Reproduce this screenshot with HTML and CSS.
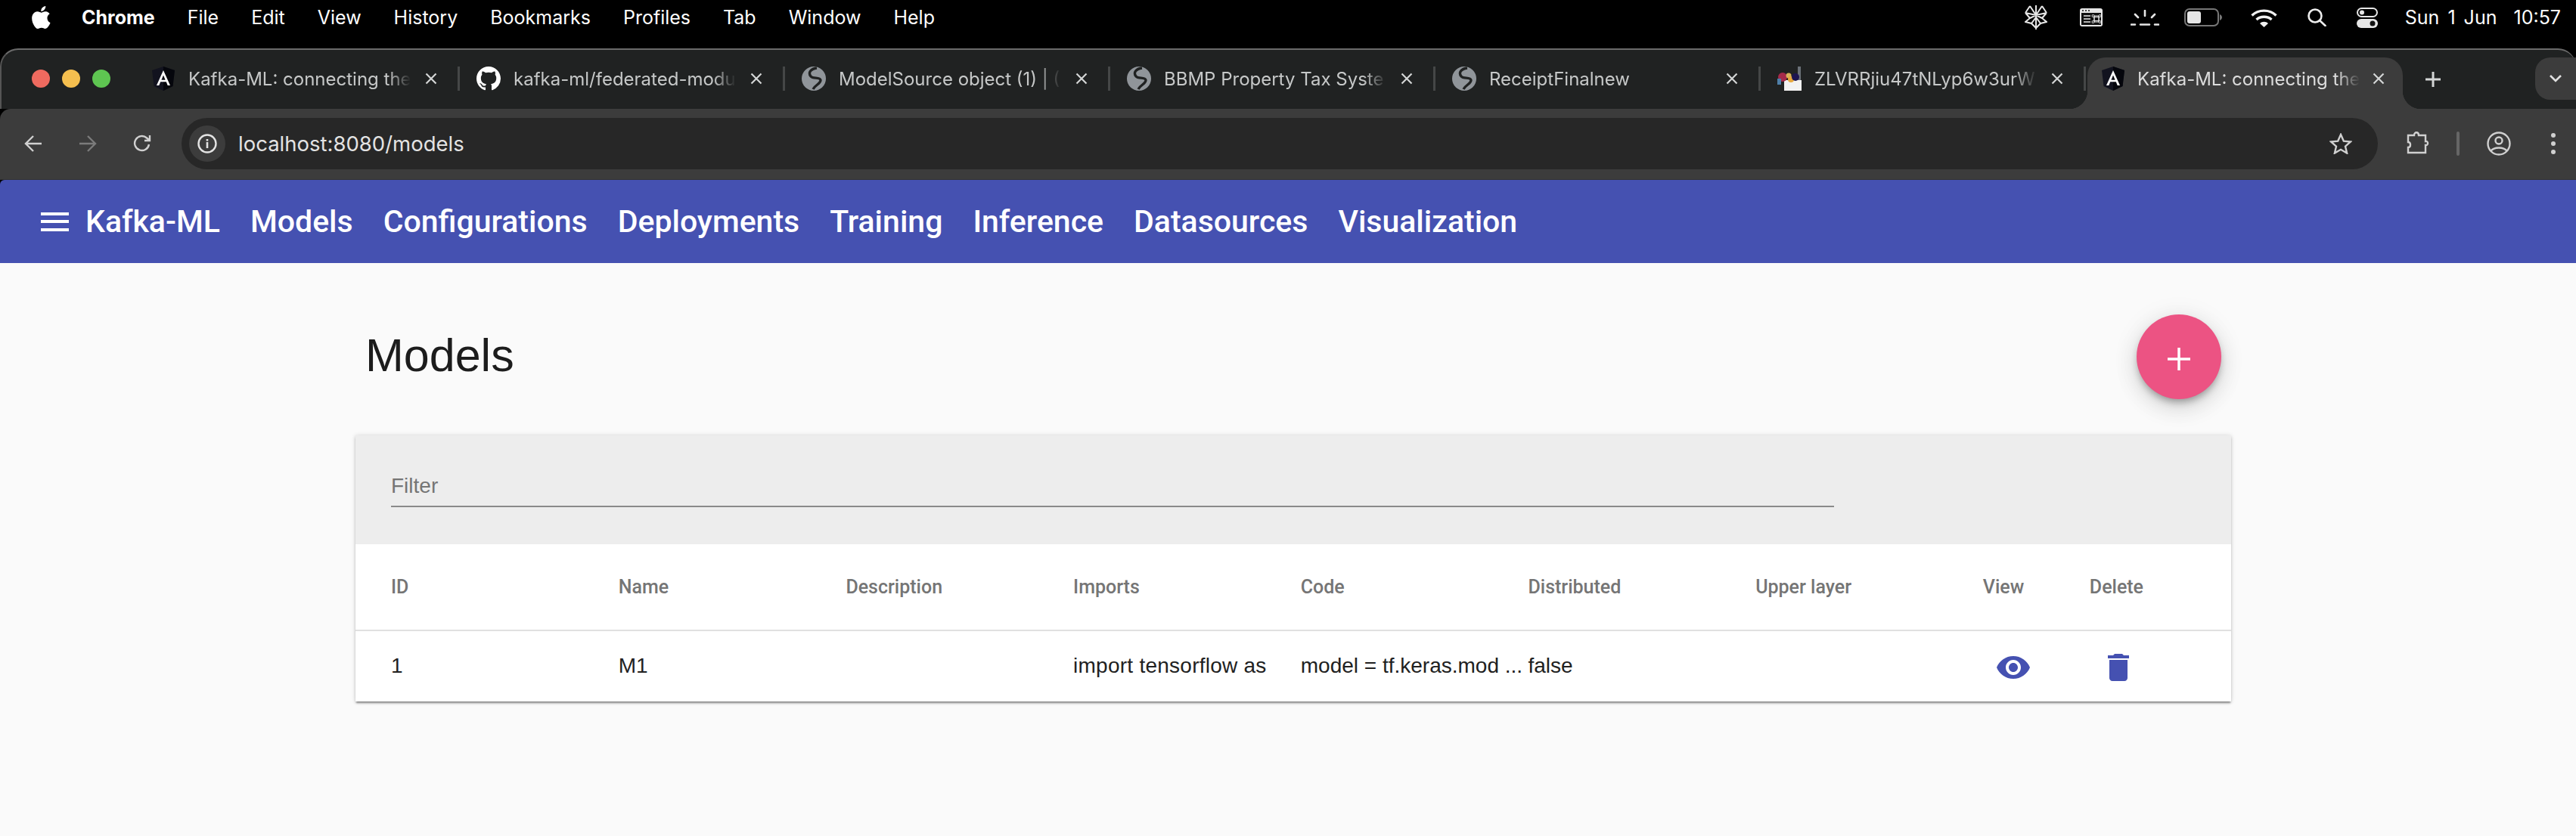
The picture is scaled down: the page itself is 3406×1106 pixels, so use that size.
FILE: index.html
```html
<!DOCTYPE html>
<html lang="en">
<head>
  <meta charset="UTF-8">
  <title>Kafka-ML: connecting the</title>
  <link rel="stylesheet" href="styles.css">
</head>
<body>
  <!-- macOS menu bar -->
  <div class="menubar">
    <svg class="apple" viewBox="3.5 2 16.5 20"><path fill="#fff" d="M18.71 19.5c-.83 1.24-1.71 2.45-3.05 2.47-1.34.03-1.77-.79-3.29-.79-1.53 0-2 .77-3.27.82-1.31.05-2.3-1.32-3.14-2.53C4.25 17 2.94 12.45 4.7 9.39c.87-1.52 2.43-2.48 4.12-2.51 1.28-.02 2.5.87 3.29.87.78 0 2.26-1.07 3.81-.91.65.03 2.47.26 3.64 1.98-.09.06-2.17 1.28-2.15 3.81.03 3.02 2.65 4.03 2.68 4.04-.03.07-.42 1.44-1.38 2.83M13 3.5c.73-.83 1.94-1.46 2.94-1.5.13 1.17-.34 2.35-1.04 3.19-.69.85-1.83 1.51-2.95 1.42-.15-1.15.41-2.35 1.05-3.11z"/></svg>
    <div class="menu-items">
      <span class="app-name">Chrome</span>
      <span>File</span>
      <span>Edit</span>
      <span>View</span>
      <span>History</span>
      <span>Bookmarks</span>
      <span>Profiles</span>
      <span>Tab</span>
      <span>Window</span>
      <span>Help</span>
    </div>
    <div class="status">
      <svg class="st-petal" viewBox="0 0 30 32" fill="none" stroke="#e6e6e6" stroke-width="2"><path d="M15 0v32M7 1l8 12 8-12M1 10l6-9M29 10l-6-9M1 10l6 7-6 5 8 2 6 6 6-6 8-2-6-5 6-7M7 17l8-4 8 4M1 10l14 3 14-3M9 24l6-8 6 8"/></svg>
      <svg class="st-cmd" viewBox="0 0 30 24"><rect width="30" height="24" rx="3" fill="#e6e6e6"/><rect x="2" y="6" width="26" height="16" fill="#111"/><g fill="#111"><circle cx="4" cy="3" r="1"/><circle cx="8" cy="3" r="1"/><circle cx="12" cy="3" r="1"/></g><path d="M5 10h9M5 14h9M5 18h9" stroke="#e6e6e6" stroke-width="1.6"/><path d="M19 10h6v8h-6zM19 10a1.5 1.5 0 1 0-1.5 1.500h9a1.500 1.500 0 1 0-1.500-1.500v8a1.500 1.500 0 1 0 1.500-1.500h-9a1.500 1.500 0 1 0 1.500 1.500z" fill="none" stroke="#e6e6e6" stroke-width="1"/></svg>
      <svg class="st-bright" viewBox="0 0 38 21" fill="none" stroke="#e6e6e6" stroke-width="2.600" stroke-linecap="round"><path d="M19 1v7M6 6l4 4M32 6l-4 4"/><path d="M1 19.500h5M13 19.500h12M32 19.500h5"/></svg>
      <svg class="st-batt" viewBox="0 0 50 24"><rect x="1" y="1" width="44" height="22" rx="6" fill="none" stroke="#777" stroke-width="2"/><rect x="4" y="4" width="18" height="16" rx="3" fill="#e6e6e6"/><path d="M47 8c2 1 3 2.500 3 4s-1 3-3 4z" fill="#777"/></svg>
      <svg class="st-wifi" viewBox="0 0 35 25" fill="none" stroke="#f0f0f0" stroke-width="3.400"><path d="M1.500 9.500C10 1 25 1 33.500 9.500M7.500 15C13 10 22 10 27.500 15"/><path d="M12 20c3-3 8-3 11 0l-5.500 5z" fill="#f0f0f0" stroke="none"/></svg>
      <svg class="st-search" viewBox="0 0 25 24" fill="none" stroke="#ececec" stroke-width="2.600" stroke-linecap="round"><circle cx="10" cy="10" r="8.500"/><path d="M16 16l7.500 7"/></svg>
      <svg class="st-toggle" viewBox="0 0 28 27"><rect x="1" y="1" width="26" height="11" rx="5.500" fill="none" stroke="#e6e6e6" stroke-width="2"/><circle cx="7" cy="6.500" r="3" fill="#e6e6e6"/><rect y="15" width="28" height="12" rx="6" fill="#e6e6e6"/><circle cx="21" cy="21" r="3.500" fill="#111"/></svg>
      <span class="clock">Sun 1 Jun  10:57</span>
    </div>
  </div>

  <!-- browser window -->
  <div class="tabstrip">
    <div class="lights">
      <i class="light red"></i>
      <i class="light yellow"></i>
      <i class="light green"></i>
    </div>
    <div class="tab">
      <svg class="favicon" viewBox="0 0 32 32"><path fill="#12131f" d="M16 0l15 5-2.500 21L16 32 3.500 26 1 5z"/><path fill="#05060c" d="M16 0l15 5-2.500 21L16 32z"/><path fill="#fff" d="M16 5l-9 20h3.300l1.900-4.700h7.600l1.900 4.700H25zm2.600 12.700h-5.200L16 11.500z"/></svg>
      <span class="tab-title">Kafka-ML: connecting the</span>
      <svg class="tab-close" viewBox="0 0 16 16"><path d="M1.500 1.500l13 13M14.500 1.500l-13 13"/></svg>
    </div>
    <div class="tab">
      <svg class="favicon" viewBox="0 0 16 16"><path fill="#fff" d="M8 0C3.580 0 0 3.580 0 8c0 3.540 2.290 6.530 5.470 7.590.4.070.55-.17.55-.38 0-.19-.01-.82-.01-1.490-2.010.37-2.530-.49-2.690-.94-.09-.23-.48-.94-.82-1.130-.28-.15-.68-.52-.01-.53.63-.01 1.080.58 1.230.82.72 1.210 1.870.87 2.330.66.07-.52.28-.87.51-1.070-1.780-.2-3.640-.89-3.640-3.950 0-.87.31-1.590.82-2.150-.08-.2-.36-1.020.08-2.120 0 0 .67-.21 2.200.82.64-.18 1.320-.27 2-.27.68 0 1.360.09 2 .27 1.530-1.040 2.200-.82 2.200-.82.44 1.100.16 1.920.08 2.120.51.56.82 1.270.82 2.150 0 3.070-1.870 3.750-3.650 3.950.29.25.54.73.54 1.480 0 1.070-.01 1.930-.01 2.200 0 .21.15.46.55.38A8.013 8.013 0 0016 8c0-4.420-3.580-8-8-8z"/></svg>
      <span class="tab-title">kafka-ml/federated-modu</span>
      <svg class="tab-close" viewBox="0 0 16 16"><path d="M1.500 1.500l13 13M14.500 1.500l-13 13"/></svg>
    </div>
    <div class="tab">
      <svg class="favicon" viewBox="0 0 32 32"><circle cx="16" cy="16" r="16" fill="#90959a"/><path d="M20 2C12 3 8 8 12 13c3 4 12 0 13 5 0 5-7 6-10 12" fill="none" stroke="#202222" stroke-width="3.400"/></svg>
      <span class="tab-title">ModelSource object (1) | (</span>
      <svg class="tab-close" viewBox="0 0 16 16"><path d="M1.500 1.500l13 13M14.500 1.500l-13 13"/></svg>
    </div>
    <div class="tab">
      <svg class="favicon" viewBox="0 0 32 32"><circle cx="16" cy="16" r="16" fill="#90959a"/><path d="M20 2C12 3 8 8 12 13c3 4 12 0 13 5 0 5-7 6-10 12" fill="none" stroke="#202222" stroke-width="3.400"/></svg>
      <span class="tab-title">BBMP Property Tax Syste</span>
      <svg class="tab-close" viewBox="0 0 16 16"><path d="M1.500 1.500l13 13M14.500 1.500l-13 13"/></svg>
    </div>
    <div class="tab">
      <svg class="favicon" viewBox="0 0 32 32"><circle cx="16" cy="16" r="16" fill="#90959a"/><path d="M20 2C12 3 8 8 12 13c3 4 12 0 13 5 0 5-7 6-10 12" fill="none" stroke="#202222" stroke-width="3.400"/></svg>
      <span class="tab-title">ReceiptFinalnew</span>
      <svg class="tab-close" viewBox="0 0 16 16"><path d="M1.500 1.500l13 13M14.500 1.500l-13 13"/></svg>
    </div>
    <div class="tab">
      <svg class="favicon" viewBox="0 0 32 32"><rect x="27" y="0" width="4" height="20" fill="#6b7178"/><rect x="9" y="18" width="23" height="14" fill="#f2f2f2"/><circle cx="7" cy="14" r="6" fill="#a52a4a"/><rect x="0" y="16" width="5" height="8" fill="#4f7fa8"/><circle cx="15" cy="12" r="3.500" fill="#d8b25a"/><circle cx="18" cy="17" r="4" fill="#e8a83c"/><circle cx="24" cy="14" r="5" fill="#1c1450"/></svg>
      <span class="tab-title">ZLVRRjiu47tNLyp6w3urW</span>
      <svg class="tab-close" viewBox="0 0 16 16"><path d="M1.500 1.500l13 13M14.500 1.500l-13 13"/></svg>
    </div>
    <div class="tab active">
      <svg class="favicon" viewBox="0 0 32 32"><path fill="#12131f" d="M16 0l15 5-2.500 21L16 32 3.500 26 1 5z"/><path fill="#05060c" d="M16 0l15 5-2.500 21L16 32z"/><path fill="#fff" d="M16 5l-9 20h3.300l1.900-4.700h7.600l1.900 4.700H25zm2.600 12.700h-5.200L16 11.500z"/></svg>
      <span class="tab-title">Kafka-ML: connecting the</span>
      <svg class="tab-close" viewBox="0 0 16 16"><path d="M1.500 1.500l13 13M14.500 1.500l-13 13"/></svg>
    </div>
    <svg class="new-tab" viewBox="0 0 20 20"><path d="M10 0v20M0 10h20"/></svg>
    <div class="tab-list">
      <svg viewBox="0 0 16 10"><path d="M1 1l7 7 7-7"/></svg>
    </div>
  </div>

  <div class="toolbar">
    <div class="nav-btn">
      <svg viewBox="0 0 24 24"><path d="M23 12H2M12 2L2 12l10 10"/></svg>
    </div>
    <div class="nav-btn off">
      <svg viewBox="0 0 24 24"><path d="M1 12h21M12 2l10 10-10 10"/></svg>
    </div>
    <div class="nav-btn">
      <svg viewBox="0 0 24 24"><path d="M21 13a9.500 9.500 0 1 1-3-8.500L22 8M22 1v7h-7"/></svg>
    </div>
    <div class="omnibox">
      <div class="site-chip">
        <svg viewBox="0 0 26 26"><circle cx="13" cy="13" r="11.500" fill="none" stroke="#e3e3e3" stroke-width="2.400"/><rect x="11.700" y="11" width="2.600" height="8" fill="#e3e3e3"/><rect x="11.700" y="7" width="2.600" height="2.600" fill="#e3e3e3"/></svg>
      </div>
      <span class="url">localhost:8080/models</span>
      <svg class="star" viewBox="0 0 30 28"><path d="M15 2l3.800 8.600 9.200.9-7 6.100 2.100 9-8.100-4.800-8.100 4.800 2.100-9-7-6.100 9.200-.9z"/></svg>
    </div>
    <div class="nav-btn ext">
      <svg viewBox="0 0 32 32"><path d="M3 5h8c0-5 6-5 6 0h9v8c4-1 4 6 0 5v10H3v-7c4 0 4-7 0-7z"/></svg>
    </div>
    <div class="toolbar-sep"></div>
    <div class="nav-btn profile">
      <svg viewBox="0 0 32 32"><circle cx="16" cy="16" r="14.500"/><circle cx="16" cy="12" r="4.500"/><path d="M5 26c5-6 17-6 22 0"/></svg>
    </div>
    <div class="dots">
      <i></i>
      <i></i>
      <i></i>
    </div>
  </div>

  <!-- the app -->
  <div class="appbar">
    <div class="hamburger">
      <i></i>
      <i></i>
      <i></i>
    </div>
    <nav class="nav">
      <a>Kafka-ML</a>
      <a>Models</a>
      <a>Configurations</a>
      <a>Deployments</a>
      <a>Training</a>
      <a>Inference</a>
      <a>Datasources</a>
      <a>Visualization</a>
    </nav>
  </div>

  <div class="page">
    <div class="page-head">
      <h1>Models</h1>
      <div class="fab">
        <svg viewBox="0 0 30 30"><path d="M15 0v30M0 15h30"/></svg>
      </div>
    </div>
    <div class="card">
      <div class="filter-bar">
        <div class="filter-field">Filter</div>
      </div>
      <div class="row head-row">
        <div>ID</div>
        <div>Name</div>
        <div>Description</div>
        <div>Imports</div>
        <div>Code</div>
        <div>Distributed</div>
        <div>Upper layer</div>
        <div>View</div>
        <div>Delete</div>
      </div>
      <div class="row data-row">
        <div>1</div>
        <div>M1</div>
        <div></div>
        <div>import tensorflow as</div>
        <div>model = tf.keras.mod ...</div>
        <div>false</div>
        <div></div>
        <div><svg class="act view-icon" viewBox="0 0 24 24"><path d="M12 4.500C7 4.500 2.730 7.610 1 12c1.730 4.390 6 7.500 11 7.500s9.270-3.110 11-7.500c-1.730-4.390-6-7.500-11-7.500zM12 17c-2.760 0-5-2.240-5-5s2.240-5 5-5 5 2.240 5 5-2.240 5-5 5zm0-8c-1.660 0-3 1.340-3 3s1.340 3 3 3 3-1.340 3-3-1.340-3-3-3z"/></svg></div>
        <div><svg class="act del-icon" viewBox="0 0 24 24"><path d="M6 19c0 1.100.9 2 2 2h8c1.100 0 2-.9 2-2V7H6v12zM19 4h-3.500l-1-1h-5l-1 1H5v2h14V4z"/></svg></div>
      </div>
    </div>
  </div>
</body>
</html>
```

FILE: styles.css
```css
html, body {
  margin: 0;
  padding: 0;
  width: 3406px;
  height: 1106px;
  overflow: hidden;
  background: #000;
  font-family: "Liberation Sans", Arial, sans-serif;
}
svg {
  display: block;
  flex: none;
}

/* menu bar */
.menubar {
  height: 64px;
  display: flex;
  align-items: center;
  padding: 0 20px 18px 41px;
  box-sizing: border-box;
  color: #fff;
  font-family: Inter, sans-serif;
  font-size: 25px;
}
.apple {
  width: 26px;
  height: 30px;
}
.menu-items {
  display: flex;
  gap: 43px;
  margin-left: 41px;
}
.app-name {
  font-weight: 700;
}
.status {
  margin-left: auto;
  display: flex;
  align-items: center;
}
.st-petal { width: 30px; height: 32px; }
.st-cmd { width: 30px; height: 24px; margin-left: 43px; }
.st-bright { width: 38px; height: 21px; margin-left: 37px; }
.st-batt { width: 50px; height: 24px; margin-left: 33px; }
.st-wifi { width: 35px; height: 25px; margin-left: 38px; }
.st-search { width: 25px; height: 24px; margin-left: 40px; }
.st-toggle { width: 28px; height: 27px; margin-left: 40px; }
.clock {
  margin-left: 36px;
  white-space: pre;
  word-spacing: 4px;
}

/* tabs */
.tabstrip {
  height: 80px;
  box-sizing: border-box;
  display: flex;
  align-items: flex-start;
  padding-top: 22px;
  background: #202222;
  border-top: 2px solid #6a6a6a;
  border-left: 2px solid #555;
  border-radius: 24px 24px 0 0;
}
.lights {
  width: 176px;
  height: 32px;
  box-sizing: border-box;
  padding-left: 40px;
  display: flex;
  align-items: center;
  gap: 16px;
}
.light {
  width: 24px;
  height: 24px;
  border-radius: 50%;
}
.red { background: #ee6a5f; }
.yellow { background: #f5bf4f; }
.green { background: #5ec551; }

.tab {
  width: 430px;
  height: 32px;
  box-sizing: border-box;
  border-right: 3px solid #454747;
  padding-left: 22px;
  display: flex;
  align-items: center;
  flex: none;
}
.favicon {
  width: 32px;
  height: 32px;
}
.tab-title {
  width: 300px;
  margin-left: 17px;
  overflow: hidden;
  white-space: nowrap;
  font-family: Inter, sans-serif;
  font-size: 24px;
  color: #c6c8c8;
  -webkit-mask-image: linear-gradient(to right, #000 88%, transparent 98%);
}
.tab-close {
  width: 16px;
  height: 16px;
  margin-left: 13px;
  fill: none;
  stroke: #d4d6d6;
  stroke-width: 2.200;
}
.tab.active {
  position: relative;
  width: 417px;
  height: 68px;
  margin: -12px 0 0 2px;
  padding: 0 0 12px 18px;
  background: #3c3c3c;
  border-right: 0;
  border-radius: 24px 24px 0 0;
}
.tab.active .tab-title {
  color: #dcdcdc;
  margin-left: 16px;
}
.tab.active .tab-close {
  margin-left: 11px;
}
.tab.active::before,
.tab.active::after {
  content: "";
  position: absolute;
  bottom: 0;
  width: 24px;
  height: 24px;
}
.tab.active::before {
  left: -24px;
  background: radial-gradient(circle at 0 0, transparent 24px, #3c3c3c 24.500px);
}
.tab.active::after {
  right: -24px;
  background: radial-gradient(circle at 100% 0, transparent 24px, #3c3c3c 24.500px);
}
.new-tab {
  width: 20px;
  height: 20px;
  margin: 7px 0 0 30px;
  fill: none;
  stroke: #d4d6d6;
  stroke-width: 3;
}
.tab-list {
  margin: -12px 0 0 auto;
  width: 54px;
  height: 56px;
  background: #3c3c3c;
  border-radius: 20px 0 0 20px;
  display: flex;
  align-items: center;
  justify-content: center;
}
.tab-list svg {
  width: 16px;
  height: 10px;
  fill: none;
  stroke: #e0e0e0;
  stroke-width: 2.600;
}

/* toolbar */
.toolbar {
  height: 94px;
  box-sizing: border-box;
  display: flex;
  align-items: center;
  padding: 0 0 2px 8px;
  background: #3c3c3c;
  border-bottom: 1px solid #333;
  border-top-left-radius: 14px;
}
.nav-btn {
  width: 72px;
  height: 48px;
  display: flex;
  align-items: center;
  justify-content: center;
  flex: none;
}
.nav-btn svg {
  width: 24px;
  height: 24px;
  fill: none;
  stroke: #d0d0d0;
  stroke-width: 2.400;
}
.nav-btn.off svg {
  stroke: #7b7b7b;
}
.omnibox {
  width: 2904px;
  height: 68px;
  margin-left: 16px;
  box-sizing: border-box;
  padding: 0 34px 0 10px;
  background: #272727;
  border-radius: 34px;
  display: flex;
  align-items: center;
  flex: none;
}
.site-chip {
  width: 48px;
  height: 48px;
  border-radius: 50%;
  background: #3c3c3c;
  display: flex;
  align-items: center;
  justify-content: center;
}
.site-chip svg {
  width: 26px;
  height: 26px;
}
.url {
  margin-left: 17px;
  font-family: Inter, sans-serif;
  font-size: 27.500px;
  color: #e3e3e3;
}
.star {
  width: 30px;
  height: 28px;
  margin-left: auto;
  fill: none;
  stroke: #d0d0d0;
  stroke-width: 2.400;
}
.ext {
  margin-left: 17px;
}
.ext svg {
  width: 32px;
  height: 32px;
}
.toolbar-sep {
  width: 4px;
  height: 32px;
  margin-left: 15px;
  background: #666;
  border-radius: 2px;
  flex: none;
}
.profile {
  margin-left: 16px;
}
.profile svg {
  width: 32px;
  height: 32px;
}
.dots {
  width: 60px;
  margin-left: 6px;
  display: flex;
  flex-direction: column;
  align-items: center;
  gap: 5px;
}
.dots i {
  width: 6px;
  height: 6px;
  border-radius: 50%;
  background: #d0d0d0;
}

/* app bar */
.appbar {
  height: 110px;
  display: flex;
  align-items: center;
  padding-left: 54px;
  background: #4551b1;
  border-top-left-radius: 6px;
  color: #fff;
}
.hamburger {
  width: 37px;
  display: flex;
  flex-direction: column;
  gap: 6.500px;
}
.hamburger i {
  height: 4px;
  background: #fff;
}
.nav {
  display: flex;
  gap: 40px;
  margin-left: 22px;
  font-family: Roboto, sans-serif;
  font-weight: 500;
  font-size: 41px;
}

/* page */
.page {
  height: 758px;
  box-sizing: border-box;
  padding: 68px 456px 0 470px;
  background: #fafafa;
}
.page-head {
  height: 112px;
  display: flex;
  align-items: center;
  justify-content: space-between;
  padding: 0 13px;
}
h1 {
  margin: -4px 0 0;
  font-size: 61px;
  font-weight: 400;
  color: #1c1c1c;
}
.fab {
  width: 112px;
  height: 112px;
  border-radius: 50%;
  background: #ec5383;
  box-shadow: 0 6px 10px -2px rgba(0, 0, 0, .3), 0 12px 30px rgba(0, 0, 0, .12), 0 4px 36px rgba(0, 0, 0, .08);
  display: flex;
  align-items: center;
  justify-content: center;
  padding-top: 6px;
  box-sizing: border-box;
}
.fab svg {
  width: 30px;
  height: 30px;
  fill: none;
  stroke: #fff;
  stroke-width: 3.500;
}
.card {
  margin-top: 48px;
  background: #fff;
  box-shadow: 0 3px 2px -1px rgba(0, 0, 0, .35), 0 2px 4px rgba(0, 0, 0, .14), 0 0 6px rgba(0, 0, 0, .12);
}
.filter-bar {
  height: 144px;
  box-sizing: border-box;
  padding: 48px 0 0 47px;
  background: #ededed;
}
.filter-field {
  width: 1908px;
  height: 47px;
  box-sizing: border-box;
  border-bottom: 2px solid #8a8a8a;
  font-size: 28px;
  line-height: 38px;
  color: #757575;
}
.row {
  display: grid;
  grid-template-columns: repeat(7, 300.700px) 141px 138px;
  align-items: center;
  padding-left: 47px;
}
.head-row {
  height: 115px;
  box-sizing: border-box;
  border-bottom: 2px solid #e0e0e0;
  font-family: Roboto, sans-serif;
  font-weight: 500;
  font-size: 25px;
  color: #757575;
}
.data-row {
  height: 93px;
  box-sizing: border-box;
  padding-bottom: 2px;
  font-size: 28px;
  color: #212121;
  white-space: nowrap;
}
.data-row div:nth-child(4) {
  letter-spacing: .25px;
}
.act {
  width: 48px;
  height: 48px;
  fill: #4551b1;
  margin-top: 5px;
}
.view-icon {
  margin-left: 16px;
}
.del-icon {
  margin-left: 14px;
}
```
